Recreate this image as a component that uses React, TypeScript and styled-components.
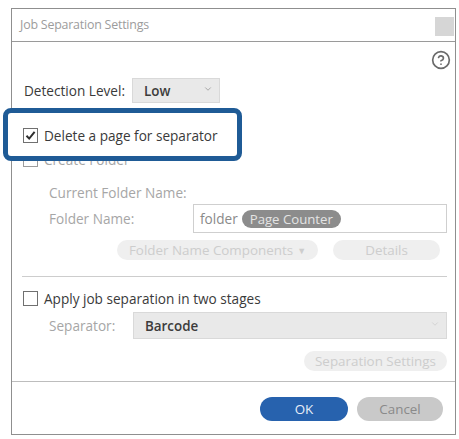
import React from "react";
import styled, { createGlobalStyle } from "styled-components";
import { CircleHelp, ChevronDown } from "lucide-react";

const Global = createGlobalStyle`
  html, body { margin: 0; padding: 0; background: #ffffff; }
  body { font-family: "Open Sans", "Noto Sans", sans-serif; }
  * { box-sizing: border-box; }
`;

const Page = styled.div`
  width: 459px;
  height: 439px;
  padding: 8px 0 0 11px;
  background: #fff;
`;

const Window = styled.div`
  width: 445px;
  border: 1px solid #8f8f8f;
  background: #fff;
  display: flex;
  flex-direction: column;
`;

const TitleBar = styled.div`
  height: 33px;
  border-bottom: 1px solid #9a9a9a;
  display: flex;
  align-items: center;
  justify-content: space-between;
  padding: 0 1px 0 8px;
`;

const Title = styled.span`
  font-size: 12.4px;
  color: #9c9c9c;
  letter-spacing: -0.2px;
  margin-top: -1px;
`;

const CloseBox = styled.div`
  width: 19px;
  height: 19px;
  background: #d6d6d6;
  align-self: flex-start;
  margin-top: 8px;
`;

const Content = styled.div`
  display: flex;
  flex-direction: column;
  padding: 0 8px 10px 11px;
`;

const HelpRow = styled.div`
  display: flex;
  justify-content: flex-end;
  margin: 8px -4px 0 0;
  height: 20px;
  color: #6a6a6a;
`;

const Row = styled.div<{ $top?: number; $h?: number; $indent?: number }>`
  display: flex;
  align-items: center;
  margin-top: ${(p) => p.$top ?? 0}px;
  height: ${(p) => p.$h ?? 20}px;
  padding-left: ${(p) => p.$indent ?? 0}px;
`;

const Label = styled.span<{ $dim?: boolean; $w?: number }>`
  font-size: 13.6px;
  color: ${(p) => (p.$dim ? "#a6a6a6" : "#3a3a3a")};
  width: ${(p) => (p.$w ? `${p.$w}px` : "auto")};
  flex-shrink: 0;
  white-space: nowrap;
`;

const Select = styled.div<{ $w?: number; $h: number }>`
  width: ${(p) => (p.$w ? `${p.$w}px` : "auto")};
  flex: ${(p) => (p.$w ? "0 0 auto" : "1 1 auto")};
  height: ${(p) => p.$h}px;
  background: #e9e9e9;
  border: 1px solid #d9d9d9;
  display: flex;
  align-items: center;
  justify-content: space-between;
  padding: 0 6px 0 11px;
  font-size: 13.4px;
  font-weight: 600;
  color: #3c3c3c;
`;

const Caret = styled.span<{ $faint?: boolean }>`
  display: flex;
  color: ${(p) => (p.$faint ? "#cfcfcf" : "#9a9a9a")};
  margin-top: -3px;
`;

const Box = styled.span<{ $dim?: boolean }>`
  width: 15px;
  height: 15px;
  border: 1px solid ${(p) => (p.$dim ? "#9c9c9c" : "#707070")};
  background: #fff;
  margin-right: 6px;
  flex-shrink: 0;
  display: flex;
  align-items: center;
  justify-content: center;
`;

const Highlight = styled.div`
  position: relative;
  z-index: 1;
  margin: 5px 0 0 -20px;
  width: 239px;
  height: 53px;
  border: 5px solid #1f5b96;
  border-radius: 8px;
  background: #fff;
  padding: 12px 0 0 15px;
`;

const Input = styled.div`
  flex: 1;
  height: 29px;
  border: 1px solid #cfcfcf;
  display: flex;
  align-items: center;
  padding-left: 6px;
  gap: 4px;
  font-size: 13.6px;
  color: #8a8a8a;
`;

const Pill = styled.span`
  height: 18px;
  padding: 0 8px;
  border-radius: 9px;
  background: #8c8c8c;
  color: #e4e4e4;
  font-size: 13.2px;
  display: flex;
  align-items: center;
`;

const FadedButton = styled.div<{ $w: number }>`
  width: ${(p) => p.$w}px;
  height: 20px;
  border-radius: 10px;
  background: #efefef;
  color: #cdcdcd;
  font-size: 13.4px;
  display: flex;
  align-items: center;
  justify-content: center;
  gap: 4px;
  white-space: nowrap;
`;

const Tri = styled.span`
  font-size: 9px;
`;

const ButtonRow = styled.div<{ $top: number; $indent?: number }>`
  display: flex;
  margin-top: ${(p) => p.$top}px;
  padding-left: ${(p) => p.$indent ?? 0}px;
  gap: 15px;
  justify-content: ${(p) => (p.$indent ? "flex-start" : "flex-end")};
`;

const Divider = styled.div`
  height: 1px;
  background: #cdcdcd;
  margin: 16px 0 0 -1px;
`;

const Footer = styled.div`
  border-top: 1px solid #bdbdbd;
  display: flex;
  justify-content: flex-end;
  gap: 9px;
  padding: 15px 12px 13px 0;
`;

const Pushbutton = styled.div<{ $primary?: boolean; $w: number }>`
  width: ${(p) => p.$w}px;
  height: 24px;
  border-radius: 12px;
  background: ${(p) => (p.$primary ? "#2762ae" : "#c9c9c9")};
  color: ${(p) => (p.$primary ? "#e8eef8" : "#8a8a8a")};
  font-size: 13.4px;
  display: flex;
  align-items: center;
  justify-content: center;
`;

const Check = () => (
  <svg width="11" height="11" viewBox="0 0 11 11">
    <polyline points="1.5,5.8 4.2,8.6 9.6,1.8" fill="none" stroke="#2e2e2e" strokeWidth="2" />
  </svg>
);

export default function App() {
  return (
    <>
      <Global />
      <Page>
        <Window>
          <TitleBar>
            <Title>Job Separation Settings</Title>
            <CloseBox />
          </TitleBar>
          <Content>
            <HelpRow>
              <CircleHelp size={20} strokeWidth={2} />
            </HelpRow>
            <Row $top={8} $h={25} $indent={1}>
              <Label $w={108}>Detection Level:</Label>
              <Select $w={88} $h={25}>
                Low
                <Caret>
                  <ChevronDown size={10} strokeWidth={2} />
                </Caret>
              </Select>
            </Row>
            <Highlight>
              <Row>
                <Box>
                  <Check />
                </Box>
                <Label>Delete a page for separator</Label>
              </Row>
            </Highlight>
            <Row $top={-12}>
              <Box $dim />
              <Label $dim>Create Folder</Label>
            </Row>
            <Row $top={13} $indent={26}>
              <Label $dim>Current Folder Name:</Label>
            </Row>
            <Row $top={2} $h={29} $indent={26}>
              <Label $dim $w={144}>Folder Name:</Label>
              <Input>
                folder
                <Pill>Page Counter</Pill>
              </Input>
            </Row>
            <ButtonRow $top={7} $indent={94}>
              <FadedButton $w={201}>
                Folder Name Components <Tri>▼</Tri>
              </FadedButton>
              <FadedButton $w={107}>Details</FadedButton>
            </ButtonRow>
            <Divider />
            <Row $top={11}>
              <Box />
              <Label>Apply job separation in two stages</Label>
            </Row>
            <Row $top={4} $h={27} $indent={26}>
              <Label $dim $w={84}>Separator:</Label>
              <Select $h={27}>
                Barcode
                <Caret $faint>
                  <ChevronDown size={10} strokeWidth={2} />
                </Caret>
              </Select>
            </Row>
            <ButtonRow $top={12}>
              <FadedButton $w={143}>Separation Settings</FadedButton>
            </ButtonRow>
          </Content>
          <Footer>
            <Pushbutton $primary $w={88}>OK</Pushbutton>
            <Pushbutton $w={86}>Cancel</Pushbutton>
          </Footer>
        </Window>
      </Page>
    </>
  );
}
